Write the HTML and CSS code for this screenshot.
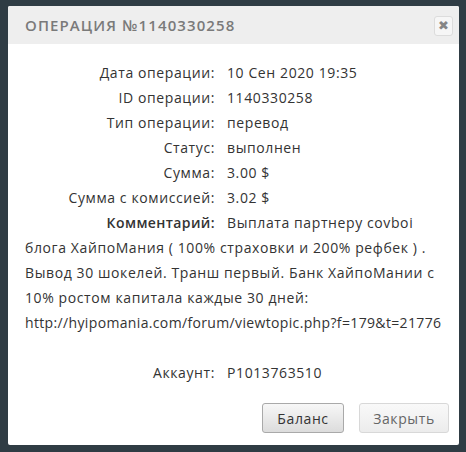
FILE: index.html
```html
<!DOCTYPE html>
<html lang="ru">
<head>
<meta charset="utf-8">
<title>Операция</title>
<link rel="stylesheet" href="styles.css">
</head>
<body>
<div class="dialog">
  <div class="header">
    <span class="title">Операция №1140330258</span>
    <button class="close" type="button">&#10006;</button>
  </div>
  <div class="content">
    <div class="row"><span class="label">Дата операции:</span>10 Сен 2020 19:35</div>
    <div class="row"><span class="label">ID операции:</span>1140330258</div>
    <div class="row"><span class="label">Тип операции:</span>перевод</div>
    <div class="row"><span class="label">Статус:</span>выполнен</div>
    <div class="row"><span class="label">Сумма:</span>3.00 $</div>
    <div class="row"><span class="label">Сумма с комиссией:</span>3.02 $</div>
    <div class="row"><span class="label strong">Комментарий:</span>Выплата партнеру covboi блога ХайпоМания ( 100% страховки и 200% рефбек ) . Вывод 30 шокелей. Транш первый. Банк ХайпоМании с 10% ростом капитала каждые 30 дней: <span class="url">http://hyipomania.com/forum/viewtopic.php?f=179&amp;t=21776</span></div>
    <div class="row empty"></div>
    <div class="row"><span class="label">Аккаунт:</span>P1013763510</div>
  </div>
  <div class="footer">
    <button class="btn btn-main" type="button">Баланс</button>
    <button class="btn btn-light" type="button">Закрыть</button>
  </div>
</div>
</body>
</html>
```
FILE: styles.css
```css
html, body {
  margin: 0;
  height: 100%;
}
body {
  background: #2f3c44;
  font-family: "Open Sans", "DejaVu Sans", sans-serif;
  padding: 6px 7px 7px 8px;
  box-sizing: border-box;
}
.dialog {
  width: 451px;
  height: 439px;
  background: #fff;
  border-radius: 2px;
  display: flex;
  flex-direction: column;
  overflow: hidden;
}
.header {
  flex-shrink: 0;
  height: 38px;
  background: #eeeeee;
  padding: 0 6px 0 17px;
  display: flex;
  align-items: center;
  justify-content: space-between;
}
.title {
  text-transform: uppercase;
  color: #7a7a7a;
  font-size: 15px;
  font-weight: 600;
  letter-spacing: 1.1px;
}
.close {
  width: 19px;
  height: 20px;
  padding: 0;
  margin-top: 1px;
  border: 1px solid #dcdcdc;
  border-radius: 3px;
  background: #f6f6f6;
  color: #858585;
  font-size: 13px;
  line-height: 18px;
  font-family: "DejaVu Sans", sans-serif;
}
.content {
  flex-shrink: 0;
  padding: 16px 17px 0;
  font-size: 14px;
  line-height: 25px;
  letter-spacing: 0.6px;
  color: #333;
}
.url {
  white-space: nowrap;
  letter-spacing: 0.35px;
}
.row.empty {
  height: 25px;
}
.label {
  display: inline-block;
  width: 190px;
  text-align: right;
  margin-right: 12px;
}
.label.strong {
  font-weight: 600;
  letter-spacing: 0.4px;
}
.footer {
  flex-shrink: 0;
  margin-top: auto;
  display: flex;
  justify-content: flex-end;
  gap: 15px;
  padding: 0 10px 12px;
}
.btn {
  height: 30px;
  padding: 0;
  border-radius: 3px;
  font-family: "Open Sans", sans-serif;
  font-size: 14px;
  letter-spacing: 0.6px;
}
.btn-main {
  width: 82px;
  border: 1px solid #a9a9a9;
  background: linear-gradient(#f7f7f7, #dcdcdc);
  color: #333;
}
.btn-light {
  width: 90px;
  border: 1px solid #d8d8d8;
  background: linear-gradient(#f9f9f9, #ececec);
  color: #666;
}
```
